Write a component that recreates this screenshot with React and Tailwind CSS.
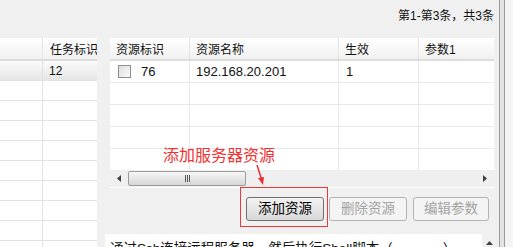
import React from 'react';

const font = "font-['Liberation_Sans','Noto_Sans_CJK_SC',sans-serif]";

const rightCols = [
  { title: '资源标识', w: 'w-[80px]' },
  { title: '资源名称', w: 'w-[149px]' },
  { title: '生效', w: 'w-[80px]' },
  { title: '参数1', w: 'w-[75px]' },
];

const LeftTable = () => (
  <div className="w-[97px] shrink-0 bg-white flex flex-col overflow-hidden">
    <div className="h-[23px] flex border-b-2 border-[#dcdcdc] bg-gradient-to-b from-white to-[#f1f1f1] shrink-0">
      <div className="w-[43px] border-r border-[#e4e4e4]" />
      <div className="flex-1 pl-[7px] pt-[3px] whitespace-nowrap overflow-hidden">任务标识</div>
    </div>
    <div className="h-[20px] flex border-b border-[#e2e2e2] bg-gradient-to-b from-[#fbfbfb] to-[#e6e6e6] shrink-0">
      <div className="w-[43px] border-r border-[#e2e2e2]" />
      <div className="flex-1 pl-[6px] pt-[1px]">12</div>
    </div>
    {Array.from({ length: 9 }).map((_, i) => (
      <div key={i} className="h-[20px] flex border-b border-[#e2e2e2] shrink-0">
        <div className="w-[43px] border-r border-[#e2e2e2]" />
        <div className="flex-1" />
      </div>
    ))}
  </div>
);

const Checkbox = () => (
  <span className="inline-block w-[13px] h-[13px] border border-[#8e8e8e] bg-gradient-to-br from-[#dcdcdc] to-[#fafafa] p-[2px]">
    <span className="block w-full h-full bg-gradient-to-br from-[#e2e2e2] to-[#f8f8f8]" />
  </span>
);

const RightTable = () => (
  <div className="ml-[13px] w-[384px] h-[150px] shrink-0 bg-white flex flex-col overflow-hidden">
    <div className="h-[23px] flex border-b-2 border-[#dcdcdc] bg-gradient-to-b from-white to-[#f1f1f1] shrink-0">
      {rightCols.map((c, i) => (
        <div key={i} className={`${c.w} ${i < 3 ? 'border-r border-[#e4e4e4]' : ''} pl-[6px] pt-[3px] whitespace-nowrap`}>
          {c.title}
        </div>
      ))}
    </div>
    <div className="h-[22px] flex border-b border-[#e6e9ee] shrink-0">
      <div className="w-[80px] border-r border-[#e6e9ee] pl-[8px] flex items-center gap-[10px]">
        <Checkbox />
        <span className="text-[13px]">76</span>
      </div>
      <div className="w-[149px] border-r border-[#e6e9ee] pl-[6px] flex items-center text-[13px]">192.168.20.201</div>
      <div className="w-[80px] border-r border-[#e6e9ee] pl-[7px] flex items-center text-[13px]">1</div>
      <div className="w-[75px]" />
    </div>
    {Array.from({ length: 4 }).map((_, i) => (
      <div key={i} className="h-[22px] flex border-b border-[#e6e9ee] shrink-0">
        <div className="w-[80px] border-r border-[#e6e9ee]" />
        <div className="w-[149px] border-r border-[#e6e9ee]" />
        <div className="w-[80px] border-r border-[#e6e9ee]" />
        <div className="w-[75px]" />
      </div>
    ))}
    <div className="h-[17px] shrink-0 bg-[#efefef] flex items-center -mt-px">
      <div className="w-[18px] flex justify-center">
        <svg width="4" height="7" viewBox="0 0 4 7"><path d="M4 0 L0 3.5 L4 7 Z" fill="#404040" /></svg>
      </div>
      <div className="w-[118px] h-[15px] rounded-[2px] border border-[#9c9c9c] bg-gradient-to-b from-[#f7f7f7] to-[#d6d6d6] flex items-center justify-center gap-[1px]">
        <span className="w-px h-[7px] bg-[#555]" />
        <span className="w-px h-[7px] bg-[#555]" />
        <span className="w-px h-[7px] bg-[#555]" />
      </div>
      <div className="flex-1" />
      <div className="w-[18px] flex justify-center">
        <svg width="4" height="7" viewBox="0 0 4 7"><path d="M0 0 L4 3.5 L0 7 Z" fill="#404040" /></svg>
      </div>
    </div>
  </div>
);

const Button = ({ children, disabled, w }) => (
  <div
    className={`${w} h-[24px] rounded-[3px] border flex items-center justify-center text-[13.5px] ${
      disabled
        ? 'border-[#b4b4b4] bg-[#f4f4f4] text-[#a3a3a3]'
        : 'border-[#707070] bg-gradient-to-b from-[#f3f3f3] to-[#d8d8d8] text-black'
    }`}
  >
    {children}
  </div>
);

export default function App() {
  return (
    <div className={`${font} w-[513px] h-[247px] bg-[#f0f0f0] text-[12px] text-[#111] flex overflow-hidden relative`}>
      <div className="w-[499px] flex flex-col shrink-0">
        <div className="h-[38px] shrink-0 flex justify-end pr-[5px] pt-[7px]">第1-第3条，共3条</div>
        <div className="flex flex-1 min-h-0">
          <LeftTable />
          <div className="flex-1 flex flex-col">
            <RightTable />
            <div className="mt-[9px] shrink-0 flex ml-[149px] gap-[5px]">
              <Button w="w-[78px]">添加资源</Button>
              <Button w="w-[78px]" disabled>删除资源</Button>
              <div className="ml-px">
                <Button w="w-[76px]" disabled>编辑参数</Button>
              </div>
            </div>
            <div className="mt-[13px] ml-[8px] shrink-0 flex h-[24px]">
              <div className="w-[377px] bg-white pl-[5px] pt-[7px] text-[13.5px] whitespace-nowrap overflow-hidden leading-[16px]">
                通过Ssh连接远程服务器，然后执行Shell脚本（<span className="inline-block w-[50px]" />）
              </div>
              <div className="w-[15px] flex justify-center pt-[7px]">
                <svg width="7" height="4" viewBox="0 0 7 4"><path d="M0 4 L3.5 0 L7 4 Z" fill="#404040" /></svg>
              </div>
            </div>
          </div>
        </div>
      </div>
      <div className="flex-1 flex">
        <div className="w-px bg-[#9a9a9a]" />
        <div className="w-[4px] bg-[#e4e4e4]" />
        <div className="w-px bg-[#9a9a9a]" />
        <div className="flex-1 bg-[#f4f4f4]" />
      </div>

      {/* annotation overlay */}
      <div className="absolute left-[163px] top-[147px] text-[16px] leading-[18px] text-[#f03232] whitespace-nowrap">
        添加服务器资源
      </div>
      <svg className="absolute left-[252px] top-[164px]" width="16" height="22" viewBox="0 0 16 22">
        <path d="M5 1 L9.5 15" stroke="#e83030" strokeWidth="1.5" fill="none" />
        <path d="M6 14 L12 13 L11 21 Z" fill="#e83030" />
      </svg>
      <div className="absolute left-[240px] top-[187px] w-[88px] h-[40px] border border-[#e83a3a]" />
    </div>
  );
}
